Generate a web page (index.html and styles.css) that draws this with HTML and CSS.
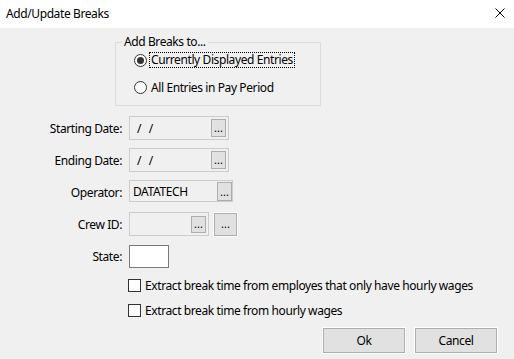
FILE: index.html
```html
<!DOCTYPE html>
<html lang="en">
<head>
    <meta charset="UTF-8">
    <meta name="viewport" content="width=device-width, initial-scale=1.0">
    <link rel="stylesheet" href="styles.css">
</head>
<body>
    <div class="dialog">
        <div class="titlebar">
            <span class="title">Add/Update Breaks</span>
            <svg class="close" width="10" height="10" viewBox="0 0 10 10">
                <path d="M0.5 0.5 L9.5 9.5 M9.5 0.5 L0.5 9.5" stroke="#000" stroke-width="1" fill="none" />
            </svg>
        </div>

        <div class="content">
            <div class="group">
                <span class="legend">Add Breaks to...</span>
                <div class="radio">
                    <span class="circle checked"></span>
                    <span class="focus">Currently Displayed Entries</span>
                </div>
                <div class="radio">
                    <span class="circle"></span>
                    <span class="radio-text">All Entries in Pay Period</span>
                </div>
            </div>

            <div class="fields">
                <span class="lbl">Starting Date:</span>
                <div class="field date">
                    <span class="val">/ /</span>
                    <span class="pick">...</span>
                </div>

                <span class="lbl">Ending Date:</span>
                <div class="field date">
                    <span class="val">/ /</span>
                    <span class="pick">...</span>
                </div>

                <span class="lbl">Operator:</span>
                <div class="field operator">
                    <span class="val">DATATECH</span>
                    <span class="pick">...</span>
                </div>

                <span class="lbl">Crew ID:</span>
                <div class="crew-row">
                    <div class="field crew">
                        <span class="val"></span>
                        <span class="pick">...</span>
                    </div>
                    <span class="pick big">...</span>
                </div>

                <span class="lbl">State:</span>
                <div class="state"></div>
            </div>

            <div class="checks">
                <div class="check">
                    <span class="box"></span>
                    <span>Extract break time from employes that only have hourly wages</span>
                </div>
                <div class="check">
                    <span class="box"></span>
                    <span>Extract break time from hourly wages</span>
                </div>
            </div>

            <div class="actions">
                <button class="btn">Ok</button>
                <button class="btn">Cancel</button>
            </div>
        </div>
    </div>
</body>
</html>
```

FILE: styles.css
```css
body {
    margin: 0;
    font-family: "Segoe UI", "Noto Sans", sans-serif;
    font-size: 12px;
    letter-spacing: -0.4px;
    color: #000;
    background-color: #f0f0f0;
}

.dialog {
    width: 514px;
    height: 359px;
    display: flex;
    flex-direction: column;
    overflow: hidden;
}

.titlebar {
    height: 28px;
    background-color: #fff;
    display: flex;
    align-items: center;
    justify-content: space-between;
    padding: 0 9px 2px 6px;
    box-sizing: border-box;
}

.content {
    flex: 1;
}

/* group box */
.group {
    position: relative;
    margin: 14px 0 0 115px;
    width: 206px;
    height: 64px;
    box-sizing: border-box;
    border: 1px solid #dcdcdc;
    padding: 9px 0 0 18px;
}

.legend {
    position: absolute;
    top: -9px;
    left: 6px;
    padding: 0 2px;
    line-height: 16px;
    background-color: #f0f0f0;
}

.radio {
    display: flex;
    align-items: center;
    height: 16px;
}

.radio + .radio {
    margin-top: 11px;
}

.circle {
    width: 13px;
    height: 13px;
    box-sizing: border-box;
    border: 1px solid #333;
    border-radius: 50%;
    background-color: #fff;
    display: flex;
    align-items: center;
    justify-content: center;
    margin-right: 2px;
}

.circle.checked::after {
    content: "";
    width: 7px;
    height: 7px;
    border-radius: 50%;
    background-color: #333;
}

.focus {
    border: 1px dotted #000;
    padding: 0 1px;
    line-height: 14px;
}

.radio-text {
    padding-left: 2px;
}

/* labelled fields */
.fields {
    display: grid;
    grid-template-columns: 122px auto;
    grid-auto-rows: 24px;
    column-gap: 7px;
    row-gap: 8px;
    align-items: center;
    justify-items: start;
    margin-top: 10px;
}

.lbl {
    justify-self: end;
}

.field {
    display: flex;
    align-items: center;
    justify-content: space-between;
    box-sizing: border-box;
    border: 1px solid #cccccc;
    height: 24px;
}

.field.date {
    width: 100px;
    padding: 0 2px 0 7px;
}

.date .val {
    word-spacing: 5px;
}

.field.operator {
    width: 104px;
    height: 22px;
    padding: 0 0 0 3px;
    margin-top: -2px;
}

.field.crew {
    width: 80px;
    padding: 0 2px 0 3px;
}

.crew-row {
    display: flex;
    align-items: center;
    gap: 5px;
}

.pick {
    width: 15px;
    height: 18px;
    box-sizing: border-box;
    border: 1px solid #adadad;
    background-color: #e1e1e1;
    display: flex;
    align-items: flex-end;
    justify-content: center;
    line-height: 12px;
    font-size: 11px;
    letter-spacing: 0;
    padding-bottom: 2px;
}

.operator .pick {
    height: 19px;
}

.crew .pick {
    height: 17px;
}

.pick.big {
    width: 23px;
    height: 23px;
    padding-bottom: 5px;
    box-shadow: 0 0 0 1px #fff;
}

.state {
    width: 40px;
    height: 23px;
    box-sizing: border-box;
    border: 1px solid #7a7a7a;
    background-color: #fff;
}

/* checkboxes */
.checks {
    margin: 9px 0 0 128px;
}

.check {
    display: flex;
    align-items: center;
    height: 16px;
    gap: 4px;
}

.check + .check {
    margin-top: 9px;
}

.box {
    width: 13px;
    height: 13px;
    box-sizing: border-box;
    border: 1px solid #333;
    background-color: #fff;
}

/* buttons */
.actions {
    display: flex;
    justify-content: flex-end;
    gap: 10px;
    margin-top: 10px;
    padding-right: 17px;
}

.btn {
    width: 82px;
    height: 25px;
    font-family: inherit;
    font-size: 12px;
    letter-spacing: -0.4px;
    color: #000;
    background-color: #e1e1e1;
    border: 1px solid #adadad;
    box-shadow: 0 0 0 1px #fff;
    padding: 0;
}
```
